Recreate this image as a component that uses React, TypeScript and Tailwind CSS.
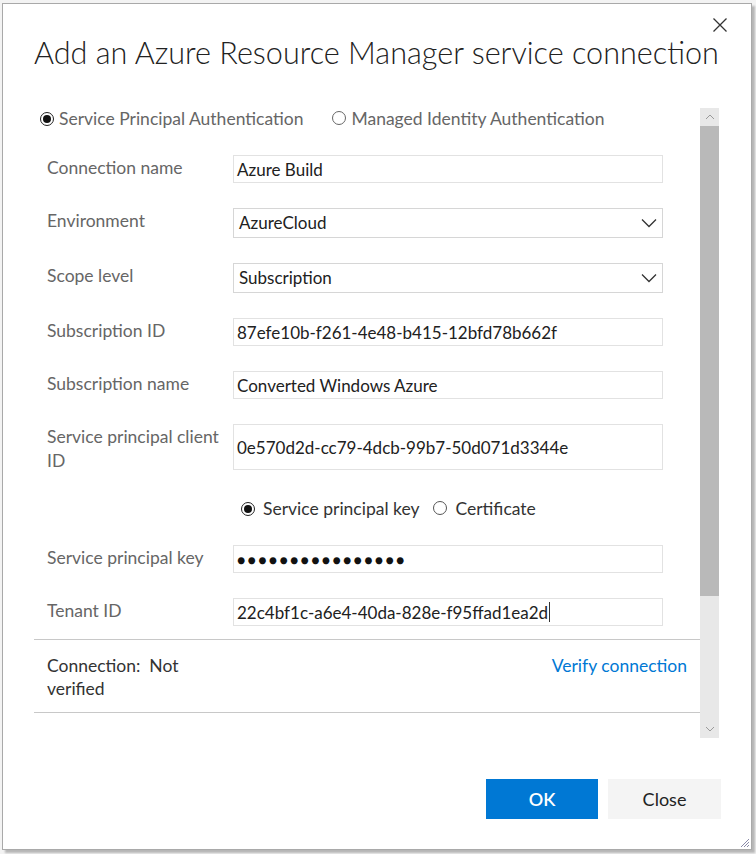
import React from "react";

const Radio = ({ checked, dark }: { checked?: boolean; dark?: boolean }) => (
  <span
    className={`inline-flex items-center justify-center w-[14px] h-[14px] rounded-full border ${
      checked ? "border-[#222]" : dark ? "border-[#555]" : "border-[#666]"
    } bg-white shrink-0`}
  >
    {checked && <span className="block w-[8px] h-[8px] rounded-full bg-[#111]" />}
  </span>
);

const Chevron = () => (
  <svg width="16" height="10" viewBox="0 0 16 10" className="shrink-0">
    <polyline points="1,1.5 8,8.5 15,1.5" fill="none" stroke="#333" strokeWidth="1.3" />
  </svg>
);

const Row = ({
  label,
  children,
  mt,
}: {
  label: React.ReactNode;
  children: React.ReactNode;
  mt: string;
}) => (
  <div className={`flex items-start ${mt}`}>
    <div className="w-[199px] pl-[13px] pt-[1px] leading-[24px] text-[17.5px] text-[#666] shrink-0">{label}</div>
    {children}
  </div>
);

const Input = ({ value, h = "h-[28px]", caret }: { value: string; h?: string; caret?: boolean }) => (
  <div
    className={`w-[430px] ${h} border border-[#e2e2e2] bg-white flex items-center pl-[3px] text-[17px] text-[#212121] leading-none`}
  >
    <span>{value}</span>
    {caret && <span className="inline-block w-px h-[20px] bg-[#333] ml-px" />}
  </div>
);

const Select = ({ value }: { value: string }) => (
  <div className="w-[430px] h-[30px] border border-[#d6d6d6] bg-white flex items-center justify-between pl-[5px] pr-[5px] text-[17px] text-[#212121]">
    <span>{value}</span>
    <Chevron />
  </div>
);

export default function App() {
  return (
    <div className="w-[756px] h-[854px] bg-[#f3f3f3] pl-[2px] pt-[3px] font-['Lato',sans-serif] overflow-hidden">
      <div className="relative w-[750px] h-[847px] bg-white border border-[#a9a9a9] shadow-[3px_3px_2px_rgba(0,0,0,0.25)] flex flex-col">
        {/* close */}
        <div className="flex justify-end pt-[13px] pr-[23px] h-[30px]">
          <svg width="16" height="16" viewBox="0 0 16 16">
            <path d="M1.5 1.5 L14.5 14.5 M14.5 1.5 L1.5 14.5" stroke="#333" strokeWidth="1.3" fill="none" />
          </svg>
        </div>
        {/* title */}
        <div className="pl-[31px] mt-[-1px] h-[40px] text-[30.6px] font-light text-[#222] leading-[40px] whitespace-nowrap">
          Add an Azure Resource Manager service connection
        </div>
        {/* body */}
        <div className="ml-[31px] mt-[35px] w-[685px] h-[630px] flex">
          <div className="flex-1 flex flex-col">
            <div className="flex items-center h-[22px] pl-[6px] text-[17.5px] text-[#666]">
              <Radio checked />
              <span className="ml-[5px]">Service Principal Authentication</span>
              <span className="ml-[29px]">
                <Radio />
              </span>
              <span className="ml-[5px]">Managed Identity Authentication</span>
            </div>

            <Row label="Connection name" mt="mt-[25px]">
              <Input value="Azure Build" />
            </Row>
            <Row label="Environment" mt="mt-[25px]">
              <Select value="AzureCloud" />
            </Row>
            <Row label="Scope level" mt="mt-[25px]">
              <Select value="Subscription" />
            </Row>
            <Row label="Subscription ID" mt="mt-[25px]">
              <Input value="87efe10b-f261-4e48-b415-12bfd78b662f" />
            </Row>
            <Row label="Subscription name" mt="mt-[25px]">
              <Input value="Converted Windows Azure" />
            </Row>
            <Row
              label={
                <>
                  Service principal client
                  <br />
                  ID
                </>
              }
              mt="mt-[25px]"
            >
              <Input value="0e570d2d-cc79-4dcb-99b7-50d071d3344e" h="h-[46px]" />
            </Row>

            <div className="flex items-center h-[22px] mt-[25px] pl-[207px] text-[17.5px] text-[#333]">
              <Radio checked />
              <span className="ml-[8px]">Service principal key</span>
              <span className="ml-[14px]">
                <Radio dark />
              </span>
              <span className="ml-[8px]">Certificate</span>
            </div>

            <Row label="Service principal key" mt="mt-[25px]">
              <div className="w-[430px] h-[28px] border border-[#e2e2e2] bg-white flex items-center pl-[3px] text-[14px] text-[#111] tracking-[2.2px]">
                ●●●●●●●●●●●●●●●●
              </div>
            </Row>
            <Row label="Tenant ID" mt="mt-[25px]">
              <Input value="22c4bf1c-a6e4-40da-828e-f95ffad1ea2d" caret />
            </Row>

            <div className="mt-[13px] h-px bg-[#c8c8c8]" />
            <div className="flex justify-between mt-[14px] pl-[13px] pr-[13px] text-[17.5px] leading-[23px]">
              <div className="text-[#333]">
                Connection:&nbsp; Not
                <br />
                verified
              </div>
              <div className="text-[#0078d4]">Verify connection</div>
            </div>
            <div className="mt-[12px] h-px bg-[#c8c8c8]" />
          </div>
          {/* scrollbar */}
          <div className="w-[19px] h-[630px] bg-[#e8e8e8] flex flex-col">
            <div className="h-[18px] flex items-center justify-center">
              <svg width="10" height="6" viewBox="0 0 10 6">
                <polyline points="1,5 5,1 9,5" fill="none" stroke="#9a9a9a" strokeWidth="1" />
              </svg>
            </div>
            <div className="h-[470px] bg-[#b9b9b9]" />
            <div className="flex-1 flex items-end justify-center pb-[6px]">
              <svg width="10" height="6" viewBox="0 0 10 6">
                <polyline points="1,1 5,5 9,1" fill="none" stroke="#9a9a9a" strokeWidth="1" />
              </svg>
            </div>
          </div>
        </div>
        {/* buttons */}
        <div className="flex justify-end gap-[10px] mt-[41px] pr-[30px]">
          <div className="w-[112px] h-[40px] bg-[#0078d4] text-white text-[18px] font-semibold flex items-center justify-center">
            OK
          </div>
          <div className="w-[113px] h-[40px] bg-[#f4f4f4] text-[#222] text-[18px] flex items-center justify-center">
            Close
          </div>
        </div>
        {/* resize grip */}
        <svg width="12" height="12" viewBox="0 0 12 12" className="absolute right-[1px] bottom-[1px]">
          <path d="M11 3 L3 11 M11 6 L6 11 M11 9 L9 11" stroke="#8a8aa8" strokeWidth="1" fill="none" />
        </svg>
      </div>
    </div>
  );
}
